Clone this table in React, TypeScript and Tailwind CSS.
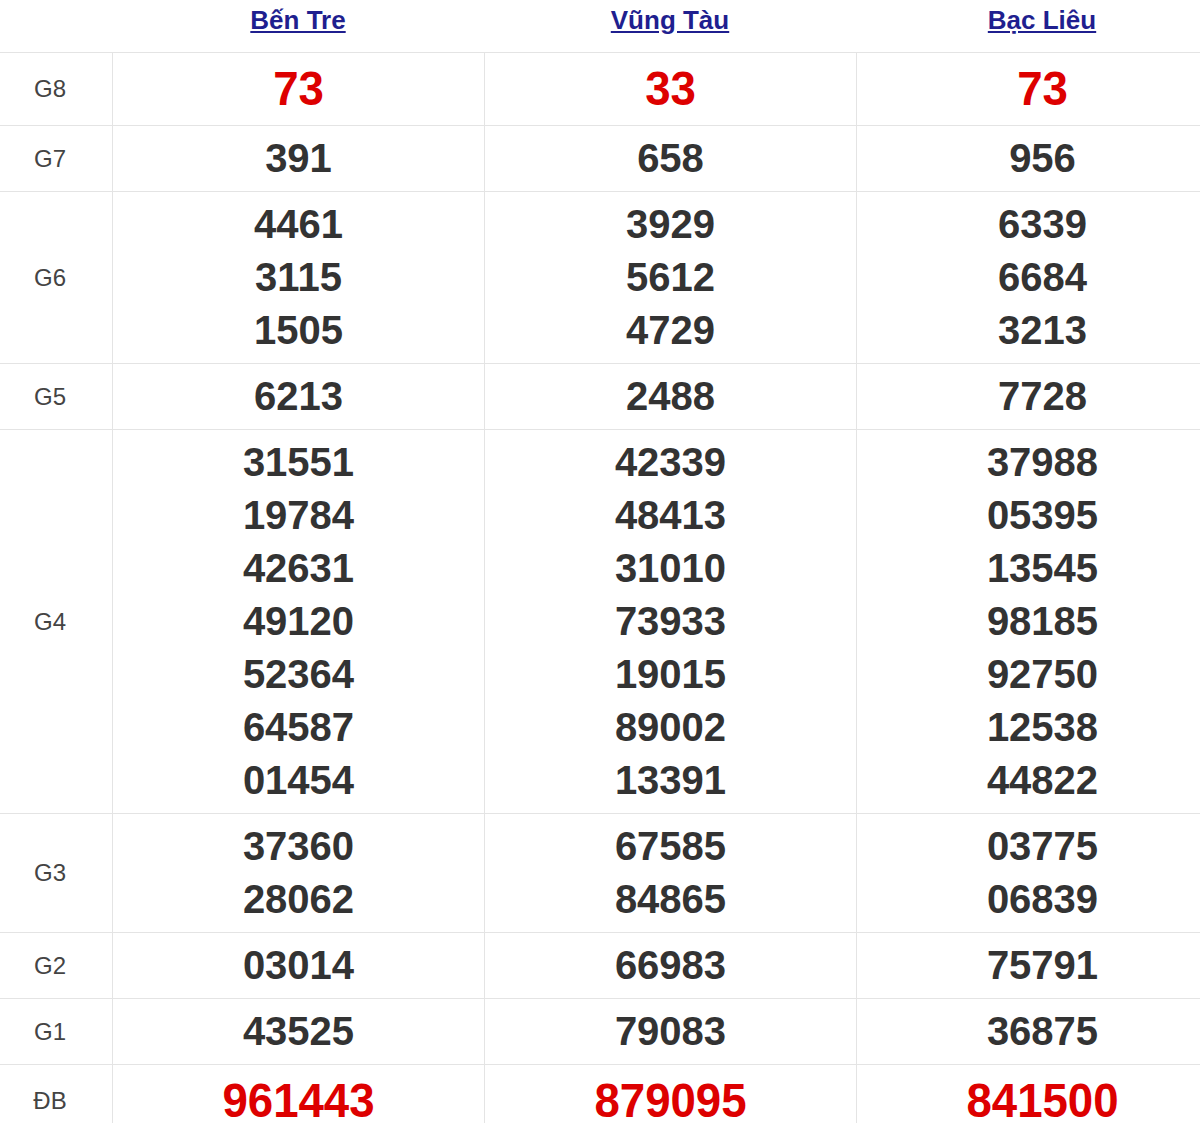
const provinces = ["Bến Tre", "Vũng Tàu", "Bạc Liêu"];

type Prize = {
    label: string;
    values: string[][];
    red?: boolean;
};

const prizes: Prize[] = [
    { label: "G8", values: [["73"], ["33"], ["73"]], red: true },
    { label: "G7", values: [["391"], ["658"], ["956"]] },
    { label: "G6", values: [["4461", "3115", "1505"], ["3929", "5612", "4729"], ["6339", "6684", "3213"]] },
    { label: "G5", values: [["6213"], ["2488"], ["7728"]] },
    {
        label: "G4",
        values: [
            ["31551", "19784", "42631", "49120", "52364", "64587", "01454"],
            ["42339", "48413", "31010", "73933", "19015", "89002", "13391"],
            ["37988", "05395", "13545", "98185", "92750", "12538", "44822"],
        ],
    },
    { label: "G3", values: [["37360", "28062"], ["67585", "84865"], ["03775", "06839"]] },
    { label: "G2", values: [["03014"], ["66983"], ["75791"]] },
    { label: "G1", values: [["43525"], ["79083"], ["36875"]] },
    { label: "ĐB", values: [["961443"], ["879095"], ["841500"]], red: true },
];

function App() {
    return (
        <div className="w-[1200px] h-[1123px] overflow-hidden bg-white font-['Liberation_Sans',Arial,sans-serif]">
            <div className="w-[1229px]">
                <div className="flex h-[53px] border-b border-[#e4e4e4]">
                    <div className="w-[112px] shrink-0" />
                    {provinces.map(name => (
                        <div key={name} className="w-[372px] shrink-0 text-center pt-[5px]">
                            <a href="#" className="text-[26px] leading-[30px] font-bold text-[#1f1f8f] underline">
                                {name}
                            </a>
                        </div>
                    ))}
                </div>

                {prizes.map(prize => (
                    <div key={prize.label} className="flex border-b border-[#e4e4e4]">
                        <div className="w-[112px] shrink-0 flex items-center justify-center pr-[12px] text-[24px] text-[#444]">
                            {prize.label}
                        </div>
                        {prize.values.map((col, i) => (
                            <div key={i} className="w-[372px] shrink-0 border-l border-[#e4e4e4] py-[6px] text-center">
                                {col.map(v => (
                                    <div
                                        key={v}
                                        className={
                                            prize.red
                                                ? "text-[48px] leading-[60px] font-bold text-[#dd0000] scale-x-[0.95]"
                                                : "text-[40px] leading-[53px] font-bold text-[#333]"
                                        }
                                    >
                                        {v}
                                    </div>
                                ))}
                            </div>
                        ))}
                    </div>
                ))}
            </div>
        </div>
    );
}

export default App;
